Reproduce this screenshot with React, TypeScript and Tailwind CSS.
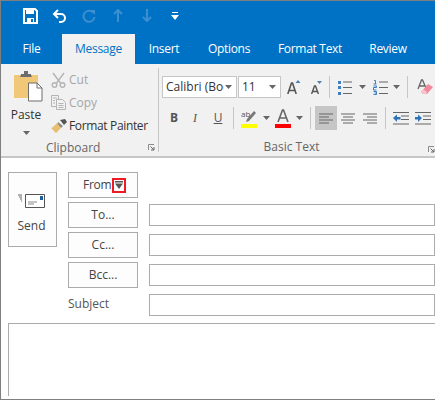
import React from "react";

const Caret = ({ className = "" }: { className?: string }) => (
  <svg width="7" height="4" viewBox="0 0 7 4" className={`shrink-0 ${className}`}>
    <path d="M0 0h7L3.5 4z" fill="#666666" />
  </svg>
);

const Sep = ({ className = "" }: { className?: string }) => (
  <div className={`w-px shrink-0 bg-[#c6c6c6] ${className}`} />
);

// Quick access toolbar icons
const SaveIcon = () => (
  <svg width="15" height="16" viewBox="0 0 15 16" className="ml-[22px]">
    <path d="M1 1h11l2 2v12H1z" fill="none" stroke="#fff" strokeWidth="2" />
    <path d="M3 1h8v5H3z" fill="#fff" />
    <path d="M4 10h7v5H4z" fill="#fff" />
    <path d="M8 11h2v3H8z" fill="#0072c6" />
  </svg>
);

const UndoIcon = () => (
  <svg width="15" height="14" viewBox="0 0 15 14" className="ml-[14px]">
    <path d="M6 1 2 5l4 4" fill="none" stroke="#fff" strokeWidth="2" />
    <path d="M2 5h7a4 4 0 0 1 0 8H7" fill="none" stroke="#fff" strokeWidth="2" />
  </svg>
);

const RedoIcon = () => (
  <svg width="14" height="14" viewBox="0 0 14 14" className="ml-[15px]">
    <path d="M11 3.500A5.500 5.500 0 1 0 12.500 8" fill="none" stroke="#3d8fcf" strokeWidth="2" />
    <path d="M8 1h5v5z" fill="#3d8fcf" />
  </svg>
);

const ArrowV = ({ down, className }: { down?: boolean; className: string }) => (
  <svg width="10" height="13" viewBox="0 0 10 13" className={className}>
    <g transform={down ? "rotate(180 5 6.500)" : undefined}>
      <path d="M5 1v12M1 5l4-4 4 4" fill="none" stroke="#3d8fcf" strokeWidth="2" />
    </g>
  </svg>
);

const Customize = () => (
  <svg width="8" height="8" viewBox="0 0 8 8" className="ml-[19px]">
    <path d="M1 0h6v1H1z" fill="#fff" />
    <path d="M0 3h8L4 8z" fill="#fff" />
  </svg>
);

// Clipboard icons
const PasteIcon = () => (
  <svg width="30" height="31" viewBox="0 0 30 31">
    <path d="M1 4h24v23H1z" fill="#f0c877" />
    <path d="M8 4V3h3V0h4v3h3v1l1 2H7z" fill="#6d6d6d" />
    <path d="M15.500 12H24l5 5v13H15.500z" fill="#fff" stroke="#6d6d6d" />
    <path d="M24 12v5h5" fill="none" stroke="#6d6d6d" />
  </svg>
);

const CutIcon = () => (
  <svg width="15" height="16" viewBox="0 0 15 16">
    <g fill="none" stroke="#b4b4b4" strokeWidth="1.400">
      <path d="M2 1l7.500 10M13 1 5.500 11" />
      <circle cx="3.500" cy="13" r="2.300" />
      <circle cx="11.500" cy="13" r="2.300" />
    </g>
  </svg>
);

const CopyIcon = () => (
  <svg width="15" height="15" viewBox="0 0 15 15">
    <g fill="#f1f1f1" stroke="#b4b4b4">
      <path d="M.5.5h7l0 11h-7z" />
      <path d="M5.500 4.500h6l3 3v7h-9z" />
    </g>
    <path d="M2 3h4M2 5.500h2M2 8h2M7.500 8.500h5M7.500 10.500h5M7.500 12.500h5" stroke="#b4b4b4" />
  </svg>
);

const BrushIcon = () => (
  <svg width="16" height="14" viewBox="0 0 16 14">
    <path d="M9 1l5-1 2 3-3 3z" fill="#555555" />
    <path d="M7 3l5 4-2 2-4-3z" fill="#8a8a8a" />
    <path d="M6 4l4 5-5 5-5-5 2-1 1-1z" fill="#e8bf71" />
  </svg>
);

const Launcher = () => (
  <svg width="7" height="7" viewBox="0 0 7 7">
    <path d="M.5 6V.5H6" fill="none" stroke="#8a8a8a" />
    <path d="M2.500 2.500 6 6M6 3v3H3" fill="none" stroke="#666666" />
  </svg>
);

// Basic text icons
const GrowIcon = () => (
  <svg width="14" height="14" viewBox="0 0 14 14" className="ml-[6px] shrink-0">
    <path d="M.8 14 4.500 3h1L9.200 14M2 10.500h6" fill="none" stroke="#555555" strokeWidth="1.600" />
    <path d="M8.500 3h5L11 0z" fill="#4a7ebb" />
  </svg>
);

const ShrinkIcon = () => (
  <svg width="11" height="13" viewBox="0 0 11 13" className="ml-[10px] mt-[1px] shrink-0">
    <path d="M.6 13 3.500 5h1L7.400 13M1.500 10.500h5" fill="none" stroke="#555555" strokeWidth="1.400" />
    <path d="M6 0h5L8.500 3z" fill="#4a7ebb" />
  </svg>
);

const BulletsIcon = () => (
  <svg width="15" height="15" viewBox="0 0 15 15">
    <path d="M0 1h3v3H0zM0 6h3v3H0zM0 12h3v3H0z" fill="#3f7fbf" />
    <path d="M5 2h9M5 7.500h9M5 13.500h9" stroke="#666666" strokeWidth="1.200" />
  </svg>
);

const NumberingIcon = () => (
  <svg width="15" height="15" viewBox="0 0 15 15">
    <path d="M1 .5h1.500V4M.5 4h3M.5 6h3v1.500h-3V10h3M.5 11.500h3v3h-3M1.500 13h2" fill="none" stroke="#3f7fbf" />
    <path d="M6 2h9M6 7.500h9M6 13.500h9" stroke="#666666" strokeWidth="1.200" />
  </svg>
);

const EraserIcon = () => (
  <svg width="16" height="16" viewBox="0 0 16 16" className="ml-[9px] shrink-0">
    <path d="M1 10 4.500 1h1L9 9M2.500 7h5" fill="none" stroke="#666666" strokeWidth="1.300" />
    <path d="M11 5l5 3-6 7H6l-2-2z" fill="#ee8a9c" />
    <path d="M4 13l2-3 4 3-1 2H6z" fill="#f6c4cd" />
  </svg>
);

const HighlightIcon = () => (
  <svg width="16" height="19" viewBox="0 0 16 19">
    <text x="0" y="8" fontSize="8" fill="#555555" fontFamily="'Open Sans', sans-serif">ab</text>
    <path d="M8 12l7-8-2-2-7 8-1 3z" fill="#777777" />
    <path d="M0 15h16v4H0z" fill="#ffff00" />
  </svg>
);

const FontColorIcon = () => (
  <svg width="16" height="19" viewBox="0 0 16 19">
    <path d="M3 13 7.500 1h1L13 13M4.500 9h7" fill="none" stroke="#666666" strokeWidth="1.600" />
    <path d="M0 15h16v4H0z" fill="#ff0000" />
  </svg>
);

const AlignIcon = ({ kind }: { kind: "left" | "center" | "right" }) => {
  const rows =
    kind === "left"
      ? "M0 1h14M0 4h10M0 7h14M0 10h10"
      : kind === "center"
        ? "M0 1h14M2 4h10M0 7h14M2 10h10"
        : "M0 1h14M4 4h10M0 7h14M4 10h10";
  return (
    <svg width="14" height="11" viewBox="0 0 14 11">
      <path d={rows} stroke="#666666" strokeWidth="1" />
    </svg>
  );
};

const IndentIcon = ({ out }: { out?: boolean }) => (
  <svg width="16" height="13" viewBox="0 0 16 13">
    <path d="M0 .5h16M8 4h8M8 7.500h8M0 12h16" stroke="#666666" />
    {out ? (
      <path d="M0 6l4-3.500V5h3.500v2.500H4V10z" fill="#2f75b5" />
    ) : (
      <path d="M7 6 3 2.500V5H0v2.500h3V10z" fill="#2f75b5" />
    )}
  </svg>
);

const SendIcon = () => (
  <svg width="27" height="14" viewBox="0 0 27 14">
    <path d="M7.500.5h19v13h-19z" fill="#fff" stroke="#555555" />
    <path d="M22 2h3v4h-3z" fill="#1f5f99" />
    <path d="M10 8h9M10 10h6" stroke="#888888" />
    <path d="M0 1h4M1 3h3M2 5h2M3 7h1" stroke="#666666" />
  </svg>
);

const FromCaret = () => (
  <svg width="8" height="8" viewBox="0 0 8 8">
    <path d="M0 0h8v1.500H0z" fill="#555555" />
    <path d="M0 2.500h8L4 8z" fill="#555555" />
  </svg>
);

const RecipientButton = ({ label }: { label: string }) => (
  <button className="h-[26px] w-[70px] shrink-0 border border-[#ababab] bg-[#fdfdfd] text-[12px] text-[#444444]">
    {label}
  </button>
);

const tabs = [
  { label: "File", width: "w-[61px]" },
  { label: "Message", width: "w-[73px]", active: true },
  { label: "Insert", width: "w-[58px]" },
  { label: "Options", width: "w-[72px]" },
  { label: "Format Text", width: "w-[90px]" },
  { label: "Review", width: "w-[66px]" },
];

export default function App() {
  return (
    <div
      className="flex h-[400px] w-[435px] flex-col overflow-hidden border-t border-b border-l border-[#7f7f7f] bg-white text-[12px]"
      style={{ fontFamily: "'Open Sans', 'Noto Sans', sans-serif" }}
    >
      {/* quick access */}
      <div className="flex h-[33px] shrink-0 items-center bg-[#0072c6] pb-[4px]">
        <SaveIcon />
        <UndoIcon />
        <RedoIcon />
        <ArrowV className="ml-[17px]" />
        <ArrowV down className="ml-[19px]" />
        <Customize />
      </div>

      {/* tabs */}
      <div className="flex h-[30px] shrink-0 bg-[#0072c6]">
        {tabs.map((t) => (
          <div
            key={t.label}
            className={`${t.width} flex items-center justify-center tracking-[-0.3px] ${
              t.active ? "bg-[#f1f1f1] text-[#0072c6]" : "text-white"
            }`}
          >
            {t.label}
          </div>
        ))}
      </div>

      {/* ribbon */}
      <div className="flex h-[94px] shrink-0 border-b-2 border-[#c6c6c6] bg-[#f1f1f1]">
        <div className="flex w-[157px] shrink-0 flex-col">
          <div className="flex h-[75px] pt-[7px]">
            <div className="flex w-[50px] shrink-0 flex-col items-center">
              <div className="ml-[4px]">
                <PasteIcon />
              </div>
              <span className="mt-[4px] text-[#333333]">Paste</span>
              <Caret className="mt-[7px]" />
            </div>
            <div className="flex flex-col gap-[6px]">
              <div className="flex h-[17px] items-center gap-[3px] text-[#a6a6a6]">
                <CutIcon />
                <span>Cut</span>
              </div>
              <div className="flex h-[17px] items-center gap-[3px] text-[#a6a6a6]">
                <CopyIcon />
                <span>Copy</span>
              </div>
              <div className="flex h-[17px] items-center gap-[2px] whitespace-nowrap tracking-[-0.35px] text-[#333333]">
                <BrushIcon />
                <span>Format Painter</span>
              </div>
            </div>
          </div>
          <div className="flex h-[17px] items-center pl-[45px] pr-[3px] text-[#666666]">
            <span className="flex-1">Clipboard</span>
            <Launcher />
          </div>
        </div>
        <Sep className="my-[4px]" />

        <div className="flex min-w-0 flex-1 flex-col pl-[3px]">
          <div className="flex h-[42px] shrink-0 items-center pt-[4px]">
            <div className="flex h-[22px] w-[75px] shrink-0 items-center justify-between overflow-hidden border border-[#c6c6c6] bg-white pl-[3px] pr-[4px] text-[#333333]">
              <span className="w-[58px] overflow-hidden whitespace-nowrap">Calibri (Body)</span>
              <Caret />
            </div>
            <div className="ml-px flex h-[22px] w-[43px] shrink-0 items-center justify-between border border-[#c6c6c6] bg-white pl-[3px] pr-[4px] text-[#333333]">
              <span>11</span>
              <Caret />
            </div>
            <GrowIcon />
            <ShrinkIcon />
            <Sep className="ml-[7px] h-[22px]" />
            <div className="ml-[8px]">
              <BulletsIcon />
            </div>
            <Caret className="ml-[6px]" />
            <div className="ml-[7px]">
              <NumberingIcon />
            </div>
            <Caret className="ml-[5px]" />
            <Sep className="ml-[7px] h-[22px]" />
            <EraserIcon />
          </div>

          <div className="flex h-[24px] shrink-0 items-center">
            <span className="ml-[6px] w-[12px] shrink-0 text-center font-bold text-[#555555]">B</span>
            <span
              className="ml-[9px] w-[12px] shrink-0 text-center italic text-[#555555]"
              style={{ fontFamily: "'Liberation Serif', serif" }}
            >
              I
            </span>
            <span className="ml-[11px] w-[12px] shrink-0 text-center text-[#555555] underline">U</span>
            <Sep className="ml-[9px] h-[22px]" />
            <div className="ml-[7px]">
              <HighlightIcon />
            </div>
            <Caret className="ml-[6px]" />
            <div className="ml-[5px]">
              <FontColorIcon />
            </div>
            <Caret className="ml-[5px]" />
            <Sep className="ml-[7px] h-[22px]" />
            <div className="ml-[4px] flex h-[24px] w-[22px] shrink-0 items-center justify-center bg-[#c6c6c6]">
              <AlignIcon kind="left" />
            </div>
            <div className="ml-[4px]">
              <AlignIcon kind="center" />
            </div>
            <div className="ml-[8px]">
              <AlignIcon kind="right" />
            </div>
            <Sep className="ml-[8px] h-[22px]" />
            <div className="ml-[7px]">
              <IndentIcon out />
            </div>
            <div className="ml-[6px]">
              <IndentIcon />
            </div>
          </div>

          <div className="relative flex h-[26px] shrink-0 items-center justify-center pr-[14px] pt-[8px] text-[#666666]">
            <span>Basic Text</span>
            <div className="absolute right-0 top-[16px]">
              <Launcher />
            </div>
          </div>
        </div>
      </div>

      {/* compose */}
      <div className="flex flex-1 flex-col pl-[7px] pt-[14px]">
        <div className="flex gap-[11px]">
          <button className="flex h-[75px] w-[49px] shrink-0 flex-col items-center border border-[#ababab] bg-[#fdfdfd] pr-[2px] pt-[21px] text-[#444444]">
            <SendIcon />
            <span className="mt-[9px]">Send</span>
          </button>
          <div className="flex flex-1 flex-col gap-[4px]">
            <div className="flex h-[26px] w-[70px] items-center border border-[#ababab] bg-[#fdfdfd] pl-[14px] tracking-[-0.3px] text-[#444444]">
              <span>From</span>
              <span className="ml-[1px] flex h-[15px] w-[14px] shrink-0 items-center justify-center border-2 border-[#ed1c24]">
                <FromCaret />
              </span>
            </div>
            {["To...", "Cc...", "Bcc..."].map((label) => (
              <div key={label} className="flex items-center gap-[11px]">
                <RecipientButton label={label} />
                <div className="h-[22px] flex-1 border border-[#ababab] bg-white" />
              </div>
            ))}
            <div className="flex h-[26px] items-center">
              <span className="w-[81px] pb-[2px] text-[#555555]">Subject</span>
              <div className="h-[22px] flex-1 border border-[#ababab] bg-white" />
            </div>
          </div>
        </div>
        <div className="mt-[5px] h-[73px] border-t border-l border-[#ababab]" />
      </div>
    </div>
  );
}
